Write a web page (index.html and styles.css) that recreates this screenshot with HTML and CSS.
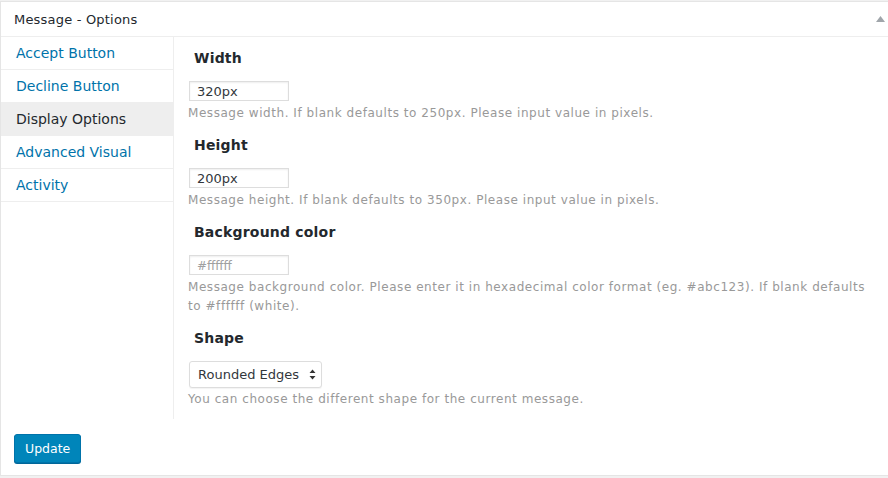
FILE: index.html
```html
<!DOCTYPE html>
<html>
<head>
<meta charset="utf-8">
<link rel="stylesheet" href="styles.css">
</head>
<body>
<div class="panel">
  <div class="panel-head">
    <span class="panel-title">Message - Options</span>
    <svg class="toggle" width="9" height="6" viewBox="0 0 9 6"><path d="M4.5 0 L9 6 L0 6 Z" fill="#a0a5aa"/></svg>
  </div>
  <div class="panel-body">
    <ul class="tabs">
      <li class="tab"><a href="#">Accept Button</a></li>
      <li class="tab"><a href="#">Decline Button</a></li>
      <li class="tab active"><a href="#">Display Options</a></li>
      <li class="tab"><a href="#">Advanced Visual</a></li>
      <li class="tab"><a href="#">Activity</a></li>
    </ul>
    <div class="fields">
      <div class="field">
        <h4 class="field-title">Width</h4>
        <input class="text-input" type="text" value="320px">
        <p class="desc">Message width. If blank defaults to 250px. Please input value in pixels.</p>
      </div>
      <div class="field">
        <h4 class="field-title">Height</h4>
        <input class="text-input" type="text" value="200px">
        <p class="desc">Message height. If blank defaults to 350px. Please input value in pixels.</p>
      </div>
      <div class="field">
        <h4 class="field-title">Background color</h4>
        <input class="text-input" type="text" placeholder="#ffffff">
        <p class="desc">Message background color. Please enter it in hexadecimal color format (eg. #abc123). If blank defaults to #ffffff (white).</p>
      </div>
      <div class="field">
        <h4 class="field-title">Shape</h4>
        <div class="select-wrap">
          <select class="select"><option>Rounded Edges</option><option>Square Edges</option></select>
          <svg class="select-arrows" width="7" height="11" viewBox="0 0 7 11"><path d="M3.5 0.5 L6.5 4 L0.5 4 Z M3.5 10.5 L6.5 7 L0.5 7 Z" fill="#333"/></svg>
        </div>
        <p class="desc shape-desc">You can choose the different shape for the current message.</p>
      </div>
    </div>
  </div>
  <div class="panel-foot">
    <button class="btn-primary">Update</button>
  </div>
</div>
</body>
</html>
```

FILE: styles.css
```css
html, body {
  margin: 0;
  padding: 0;
}
body {
  background: #f1f1f1;
  font-family: "DejaVu Sans", Verdana, sans-serif;
  color: #23282d;
  overflow: hidden;
  width: 888px;
  height: 478px;
}
.panel {
  margin-top: 1px;
  width: 910px;
  background: #fff;
  border: 1px solid #e5e5e5;
  box-sizing: border-box;
}
.panel-head {
  height: 34px;
  border-bottom: 1px solid #eeeeee;
  display: flex;
  align-items: center;
  padding-left: 13px;
  position: relative;
}
.panel-title {
  font-size: 13px;
  letter-spacing: 0.2px;
  color: #23282d;
}
.toggle {
  position: absolute;
  left: 875px;
  top: 14px;
}
.panel-body {
  display: flex;
}
.tabs {
  list-style: none;
  margin: 0;
  padding: 0;
  width: 172px;
  border-right: 1px solid #eeeeee;
  box-sizing: content-box;
}
.tab {
  height: 32px;
  border-bottom: 1px solid #eeeeee;
  display: flex;
  align-items: center;
  padding-left: 15px;
  font-size: 14px;
}
.tab a {
  color: #0073aa;
  text-decoration: none;
}
.tab.active {
  background: #eeeeee;
}
.tab.active a {
  color: #23282d;
}
.fields {
  padding: 11px 0 10px 14px;
  display: flex;
  flex-direction: column;
  gap: 12px;
}
.field {
  display: flex;
  flex-direction: column;
  align-items: flex-start;
}
.field-title {
  margin: 0 0 13px 6px;
  font-size: 14px;
  font-weight: bold;
  line-height: 20px;
  letter-spacing: 0.2px;
  color: #23282d;
}
.text-input {
  width: 100px;
  height: 20px;
  box-sizing: border-box;
  margin: 0 0 3px 1px;
  padding: 0 7px;
  border: 1px solid #dddddd;
  box-shadow: inset 0 1px 2px rgba(0, 0, 0, 0.07);
  font-family: "DejaVu Sans", Verdana, sans-serif;
  font-size: 13px;
  color: #32373c;
  background: #fff;
  outline: none;
}
.text-input::placeholder {
  color: #a0a0a0;
  font-size: 12px;
}
.desc {
  margin: 0;
  font-size: 12px;
  line-height: 19px;
  letter-spacing: 0.55px;
  color: #999999;
  max-width: 690px;
}
.select-wrap {
  position: relative;
  margin: 0 0 2px 1px;
}
.select {
  -webkit-appearance: none;
  appearance: none;
  width: 133px;
  height: 27px;
  box-sizing: border-box;
  border: 1px solid #dddddd;
  border-radius: 3px;
  box-shadow: 0 1px 1px rgba(0, 0, 0, 0.05);
  background: #fff;
  padding: 0 0 0 8px;
  font-family: "DejaVu Sans", Verdana, sans-serif;
  font-size: 13px;
  color: #32373c;
  outline: none;
}
.select-arrows {
  position: absolute;
  left: 120px;
  top: 8px;
  pointer-events: none;
}
.panel-foot {
  padding: 15px 0 12px 13px;
}
.btn-primary {
  height: 29px;
  padding: 0 10px;
  background: #0085ba;
  border: 1px solid #0073aa;
  border-radius: 3px;
  box-shadow: 0 1px 0 #006799;
  color: #fff;
  font-family: "DejaVu Sans", Verdana, sans-serif;
  font-size: 12.5px;
  line-height: 26px;
  cursor: pointer;
}
```
